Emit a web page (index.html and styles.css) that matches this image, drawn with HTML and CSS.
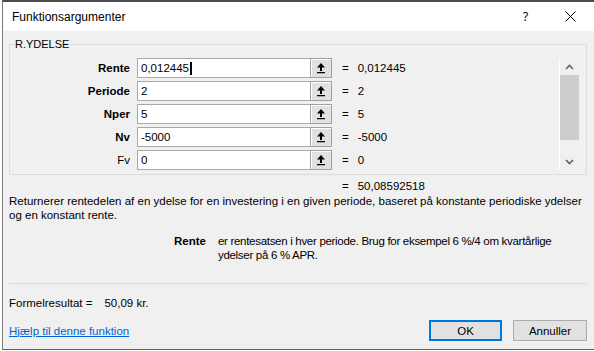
FILE: index.html
```html
<!DOCTYPE html>
<html lang="da">
<head>
  <meta charset="UTF-8" />
  <title>Funktionsargumenter</title>
  <link rel="stylesheet" href="styles.css">
</head>
<body>
  <div class="dialog">
    <div class="titlebar">
      <span class="title">Funktionsargumenter</span>
      <span class="tb-btn help">?</span>
      <span class="tb-btn close">
        <svg width="11" height="11" viewBox="0 0 11 11"><path d="M0.5 0.5 L10.5 10.5 M10.5 0.5 L0.5 10.5" stroke="#000" stroke-width="1" fill="none"/></svg>
      </span>
    </div>

    <div class="content">
      <fieldset class="group">
        <legend>R.YDELSE</legend>
        <div class="args">
          <div class="arg-list">
            <div class="arg">
              <span class="arg-name bold">Rente</span>
              <div class="arg-input">0,012445<span class="caret"></span></div>
              <button class="ref-btn"><svg width="10" height="12" viewBox="0 0 10 12"><path d="M5 1 L9 5.5 H1 Z M4 5.5 H6 V9 H4 Z M1 10 H9 V11.2 H1 Z" fill="#000"/></svg></button>
              <span class="arg-eq"><span>=</span><span>0,012445</span></span>
            </div>
            <div class="arg">
              <span class="arg-name bold">Periode</span>
              <div class="arg-input">2</div>
              <button class="ref-btn"><svg width="10" height="12" viewBox="0 0 10 12"><path d="M5 1 L9 5.5 H1 Z M4 5.5 H6 V9 H4 Z M1 10 H9 V11.2 H1 Z" fill="#000"/></svg></button>
              <span class="arg-eq"><span>=</span><span>2</span></span>
            </div>
            <div class="arg">
              <span class="arg-name bold">Nper</span>
              <div class="arg-input">5</div>
              <button class="ref-btn"><svg width="10" height="12" viewBox="0 0 10 12"><path d="M5 1 L9 5.5 H1 Z M4 5.5 H6 V9 H4 Z M1 10 H9 V11.2 H1 Z" fill="#000"/></svg></button>
              <span class="arg-eq"><span>=</span><span>5</span></span>
            </div>
            <div class="arg">
              <span class="arg-name bold">Nv</span>
              <div class="arg-input">-5000</div>
              <button class="ref-btn"><svg width="10" height="12" viewBox="0 0 10 12"><path d="M5 1 L9 5.5 H1 Z M4 5.5 H6 V9 H4 Z M1 10 H9 V11.2 H1 Z" fill="#000"/></svg></button>
              <span class="arg-eq"><span>=</span><span>-5000</span></span>
            </div>
            <div class="arg">
              <span class="arg-name">Fv</span>
              <div class="arg-input">0</div>
              <button class="ref-btn"><svg width="10" height="12" viewBox="0 0 10 12"><path d="M5 1 L9 5.5 H1 Z M4 5.5 H6 V9 H4 Z M1 10 H9 V11.2 H1 Z" fill="#000"/></svg></button>
              <span class="arg-eq"><span>=</span><span>0</span></span>
            </div>
          </div>

          <div class="scrollbar">
            <div class="sb-arrow"><svg width="9" height="6" viewBox="0 0 9 6"><path d="M1 5 L4.5 1.5 L8 5" stroke="#606060" stroke-width="1.6" fill="none"/></svg></div>
            <div class="sb-track"><div class="sb-thumb"></div></div>
            <div class="sb-arrow"><svg width="9" height="6" viewBox="0 0 9 6"><path d="M1 1 L4.5 4.5 L8 1" stroke="#606060" stroke-width="1.6" fill="none"/></svg></div>
          </div>
        </div>
      </fieldset>

      <div class="result"><span>=</span><span>50,08592518</span></div>

      <p class="desc">Returnerer rentedelen af en ydelse for en investering i en given periode, baseret på konstante periodiske ydelser<br>og en konstant rente.</p>

      <div class="arg-help">
        <span class="bold">Rente</span>
        <span class="arg-help-text">er rentesatsen i hver periode. Brug for eksempel 6 %/4 om kvartårlige<br>ydelser på 6 % APR.</span>
      </div>

      <hr class="sep">

      <div class="formula">Formelresultat =<span class="formula-value">50,09 kr.</span></div>

      <div class="footer">
        <a href="#" class="help-link">Hjælp til denne funktion</a>
        <div class="buttons">
          <button class="btn primary">OK</button>
          <button class="btn">Annuller</button>
        </div>
      </div>
    </div>
  </div>
</body>
</html>
```

FILE: styles.css
```css
/* Global */
body {
  margin: 0;
  background: #fff;
  font-family: 'Liberation Sans', Arial, sans-serif;
  font-size: 11.5px;
  color: #000;
}
.bold {
  font-weight: bold;
}
/* Dialog frame */
.dialog {
  box-sizing: border-box;
  height: 350px;
  margin-left: 2px;
  border-top: 2px solid #4b4b4b;
  border-left: 1px solid #7a7a7a;
  border-bottom: 1px solid #5f5f5f;
  background: #f0f0f0;
  display: flex;
  flex-direction: column;
}
.titlebar {
  height: 29px;
  background: #fff;
  display: flex;
  align-items: center;
  padding-left: 9px;
}
.title {
  flex: 1;
  font-size: 12px;
}
.tb-btn {
  width: 45px;
  display: flex;
  justify-content: center;
  align-items: center;
  font-family: 'Noto Sans', sans-serif;
  font-size: 12px;
}
.help {
  padding-left: 3px;
}
.close {
  margin-right: 1px;
}
.content {
  flex: 1;
  display: flex;
  flex-direction: column;
  padding: 0 7px 0 6px;
}
/* Argument group */
.group {
  margin: 7px 0 0;
  padding: 7px 7px 4px 0;
  border: 1px solid #dcdcdc;
  min-width: 0;
}
.group legend {
  margin-left: 4px;
  padding: 0 1px;
  line-height: 13px;
  font-size: 11px;
}
.args {
  display: flex;
}
.arg-list {
  flex: 1;
  display: flex;
  flex-direction: column;
  gap: 3px;
}
.arg {
  display: grid;
  grid-template-columns: 127px 173px 22px 1fr;
  height: 20px;
}
.arg-name {
  align-self: center;
  text-align: right;
  padding-right: 7px;
}
.arg-input {
  border: 1px solid #a9a9a9;
  border-right: none;
  background: #fff;
  display: flex;
  align-items: center;
  padding-left: 3px;
}
.caret {
  display: inline-block;
  width: 2px;
  height: 13px;
  margin-left: 1px;
  background: #000;
}
.ref-btn {
  border: 1px solid #a0a0a0;
  background: #e1e1e1;
  box-shadow: inset 1px 1px #fff;
  padding: 0;
  display: flex;
  align-items: center;
  justify-content: center;
}
.arg-eq {
  display: flex;
  align-items: center;
  gap: 9px;
  padding-left: 10px;
}
/* Scrollbar */
.scrollbar {
  width: 19px;
  border-left: 1px solid #fff;
  display: flex;
  flex-direction: column;
}
.sb-arrow {
  height: 17px;
  display: flex;
  align-items: center;
  justify-content: center;
}
.sb-track {
  flex: 1;
}
.sb-thumb {
  height: 65px;
  background: #cdcdcd;
}
/* Result & description */
.result {
  display: flex;
  gap: 9px;
  padding-left: 333px;
  margin-top: 4px;
  line-height: 14px;
}
.desc {
  margin: 1px 0 0 0;
  line-height: 14px;
}
.arg-help {
  display: flex;
  gap: 12px;
  margin: 12px 0 0 165px;
  line-height: 14px;
}
.arg-help-text {
  letter-spacing: -0.3px;
}
.sep {
  margin: 21px 0 0;
  border: none;
  border-top: 1px solid #d9d9d9;
}
.formula {
  margin-top: 12px;
  line-height: 14px;
}
.formula-value {
  margin-left: 12px;
}
/* Footer */
.footer {
  margin-top: 10px;
  display: flex;
  align-items: center;
  justify-content: space-between;
}
.help-link {
  color: #0066cc;
}
.buttons {
  display: flex;
  gap: 11px;
}
.btn {
  box-sizing: border-box;
  width: 74px;
  height: 21px;
  border: 1px solid #adadad;
  background: #e1e1e1;
  font-family: 'Liberation Sans', Arial, sans-serif;
  font-size: 11.5px;
  padding: 0;
}
.btn.primary {
  width: 73px;
  border: 2px solid #0078d7;
}
```
